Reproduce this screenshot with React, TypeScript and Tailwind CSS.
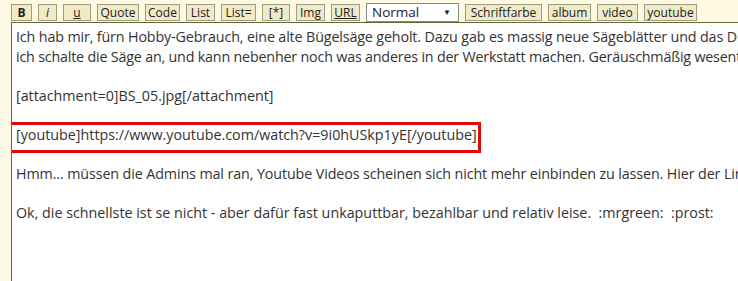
import React from "react";

const btn =
  "h-[17px] border border-[#a09c80] bg-[#f1eac6] text-[12px] leading-[15px] text-[#222] font-['Open_Sans',sans-serif] shrink-0 flex items-center justify-center";

export default function App() {
  return (
    <div className="w-[738px] h-[281px] overflow-hidden bg-[#fdf9e2] font-['Open_Sans',sans-serif]">
      <div className="flex items-center gap-[6px] pl-[11px] pt-[2px] h-[22px]">
        <button className={btn + " w-[21px] font-bold"}>B</button>
        <button className={btn + " w-[19px] italic"}>i</button>
        <button className={btn + " w-[28px] underline"}>u</button>
        <button className={btn + " w-[42px]"}>Quote</button>
        <button className={btn + " w-[35px]"}>Code</button>
        <button className={btn + " w-[29px]"}>List</button>
        <button className={btn + " w-[35px]"}>List=</button>
        <button className={btn + " w-[28px]"}>[*]</button>
        <button className={btn + " w-[29px]"}>Img</button>
        <button className={btn + " w-[29px] underline"}>URL</button>
        <div className="h-[19px] w-[93px] border border-[#8a8a8a] bg-white flex items-center justify-between pl-[5px] pr-[7px] text-[13.5px] text-[#222] shrink-0">
          <span>Normal</span>
          <span className="text-[8px]">▼</span>
        </div>
        <button className={btn + " w-[77px]"}>Schriftfarbe</button>
        <button className={btn + " w-[43px]"}>album</button>
        <button className={btn + " w-[41px]"}>video</button>
        <button className={btn + " w-[53px]"}>youtube</button>
      </div>
      <div className="ml-[11px] h-[270px] border-l border-t border-[#5f6b35] bg-white pl-[4px] pt-[4px] text-[14.3px] leading-[19.6px] text-[#333] whitespace-pre overflow-hidden">
        <div className="tracking-[-0.14px]">Ich hab mir, fürn Hobby-Gebrauch, eine alte Bügelsäge geholt. Dazu gab es massig neue Sägeblätter und das Di</div>
        <div className="tracking-[-0.19px]">ich schalte die Säge an, und kann nebenher noch was anderes in der Werkstatt machen. Geräuschmäßig wesent</div>
        <div>&nbsp;</div>
        <div>[attachment=0]BS_05.jpg[/attachment]</div>
        <div>&nbsp;</div>
        <div className="relative">
          <span>[youtube]https://www.youtube.com/watch?v=9i0hUSkp1yE[/youtube]</span>
          <div className="absolute left-[-7px] top-[-3px] w-[472px] h-[31px] border-[3px] border-[#e00a0a]" />
        </div>
        <div>&nbsp;</div>
        <div className="tracking-[-0.11px]">Hmm... müssen die Admins mal ran, Youtube Videos scheinen sich nicht mehr einbinden zu lassen. Hier der Lin</div>
        <div>&nbsp;</div>
        <div>Ok, die schnellste ist se nicht - aber dafür fast unkaputtbar, bezahlbar und relativ leise.  :mrgreen:  :prost:</div>
      </div>
    </div>
  );
}
